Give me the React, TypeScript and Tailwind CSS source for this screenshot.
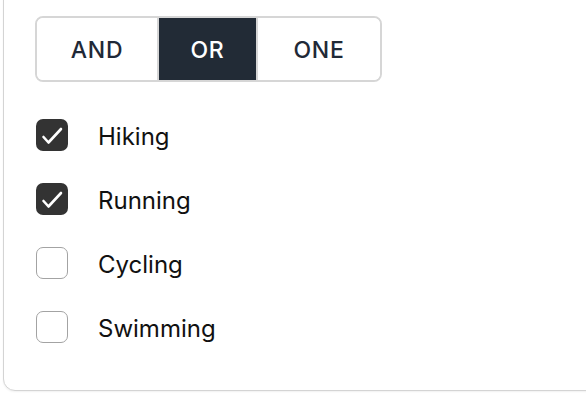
import { useState } from 'react';

const modes = ['AND', 'OR', 'ONE'];
const activities = [
  { name: 'Hiking', checked: true },
  { name: 'Running', checked: true },
  { name: 'Cycling', checked: false },
  { name: 'Swimming', checked: false },
];

function Check({ checked }: { checked: boolean }) {
  if (!checked) {
    return <span className="w-[32px] h-[32px] rounded-[7px] border border-[#a3a3a3] bg-white flex-shrink-0" />;
  }
  return (
    <span className="w-[32px] h-[32px] rounded-[7px] bg-[#333333] flex items-center justify-center flex-shrink-0">
      <svg width="32" height="32" viewBox="0 0 32 32" fill="none">
        <path d="M7.5 18l5 5.5L25 10" stroke="white" strokeWidth="2.6" strokeLinecap="round" strokeLinejoin="round" />
      </svg>
    </span>
  );
}

export default function App() {
  const [mode, setMode] = useState('OR');
  const [items, setItems] = useState(activities);

  return (
    <div className="w-[586px] h-[400px] overflow-hidden bg-white" style={{ fontFamily: 'Inter, "Liberation Sans", sans-serif' }}>
      <div className="ml-[3px] -mt-[15px] w-[640px] border border-[#d4d4d4] rounded-xl shadow-[0_1px_2px_rgba(0,0,0,0.06)] bg-white pt-[30px] pl-[31px] pb-[47px]">
        {/* Mode toggle */}
        <div className="inline-flex h-[66px] border-2 border-[#d6d6d6] rounded-lg overflow-hidden">
          {modes.map((m, i) => (
            <button
              key={m}
              onClick={() => setMode(m)}
              className={
                'flex items-center justify-center pt-[3px] text-[23px] font-medium tracking-[0.03em] ' +
                (i === 0 ? 'w-[120px] ' : i === 1 ? 'w-[101px] border-x-2 border-[#d6d6d6] ' : 'w-[122px] ') +
                (mode === m ? 'bg-[#222b36] text-white' : 'bg-white text-[#1f2937]')
              }
            >
              {m}
            </button>
          ))}
        </div>

        {/* Activities */}
        <div className="mt-[37px] flex flex-col gap-[32px] pl-[1px]">
          {items.map((it, i) => (
            <label
              key={it.name}
              className="flex items-center gap-[30px] cursor-pointer"
              onClick={() => setItems(items.map((x, j) => (j === i ? { ...x, checked: !x.checked } : x)))}
            >
              <Check checked={it.checked} />
              <span className="mt-[3px] text-[24px] text-[#111111] leading-none">{it.name}</span>
            </label>
          ))}
        </div>
      </div>
    </div>
  );
}
